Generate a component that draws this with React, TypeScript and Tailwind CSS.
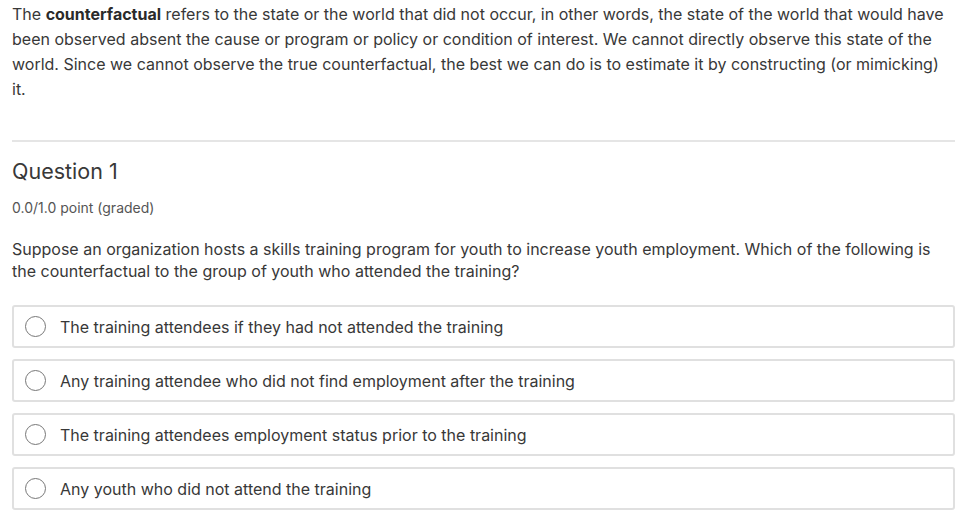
import React from "react";

const options = [
  "The training attendees if they had not attended the training",
  "Any training attendee who did not find employment after the training",
  "The training attendees employment status prior to the training",
  "Any youth who did not attend the training",
];

export default function App() {
  return (
    <div
      className="w-[977px] h-[527px] bg-white overflow-hidden text-[#333]"
      style={{ fontFamily: "Inter, 'Noto Sans', sans-serif" }}
    >
      <div className="pl-[12px] pr-[22px] pt-[2px]">
        <p className="text-[16px] leading-[25px] text-[#383838]">
          The <strong className="font-bold text-[#2a2a2a]">counterfactual</strong> refers to the state or the world that did not occur, in other words, the state of the world that would have been observed absent the cause or program or policy or condition of interest. We cannot directly observe this state of the world. Since we cannot observe the true counterfactual, the best we can do is to estimate it by constructing (or mimicking) it.
        </p>
        <div className="mt-[38px] border-t-2 border-[#e5e5e5]" />
        <h2 className="mt-[15px] text-[21.5px] leading-[28px] font-normal text-[#383838]">Question 1</h2>
        <div className="mt-[13px] text-[14px] leading-[20px] text-[#555]">0.0/1.0 point (graded)</div>
        <p className="mt-[20px] text-[16px] leading-[22px] text-[#383838]">
          Suppose an organization hosts a skills training program for youth to increase youth employment. Which of the following is the counterfactual to the group of youth who attended the training?
        </p>
        <div className="mt-[23px] flex flex-col gap-[11px]">
          {options.map((o) => (
            <label
              key={o}
              className="flex items-center h-[43px] border-2 border-[#e0e0e0] rounded-[3px] pl-[11px]"
            >
              <span className="w-[21px] h-[21px] rounded-full border border-[#777] bg-white shrink-0" />
              <span className="ml-[14px] text-[16px] text-[#383838]">{o}</span>
            </label>
          ))}
        </div>
      </div>
    </div>
  );
}
